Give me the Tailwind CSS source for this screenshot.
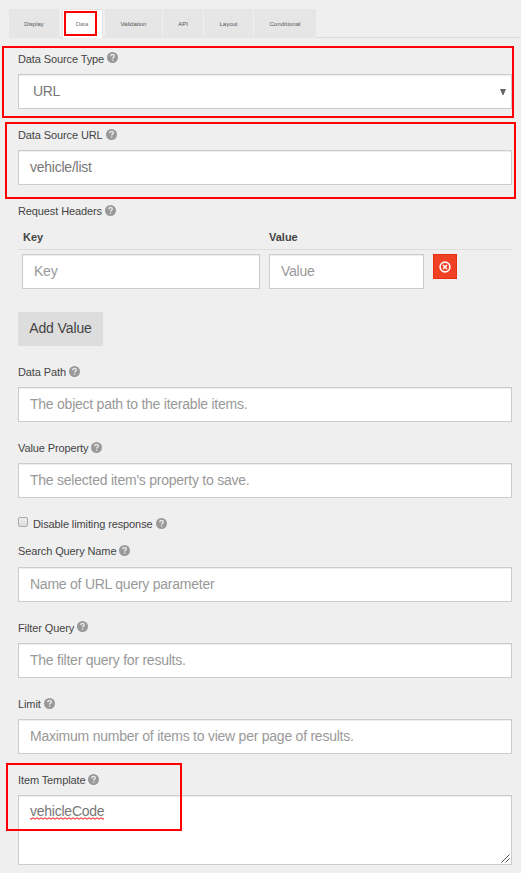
<!DOCTYPE html>
<html lang="en">
<head>
<meta charset="utf-8">
<title>Component settings</title>
<script src="https://cdn.jsdelivr.net/npm/@tailwindcss/browser@4"></script>
</head>
<body class="relative h-[873px] w-[521px] overflow-hidden bg-[#efefef] font-['Liberation_Sans',Arial,sans-serif] text-[11px] tracking-[-0.11px] text-[#444]">
<svg class="hidden">
  <symbol id="help" viewBox="0 0 11 11"><circle cx="5.5" cy="5.5" r="5.5" fill="#999"/><path d="M3.700 4.200C3.800 3.100 4.500 2.600 5.500 2.600c1.100 0 1.800.600 1.800 1.500 0 1.200-1.700 1.300-1.700 2.300M5.600 7.400v1.300" fill="none" stroke="#e4e4e4" stroke-width="1.500"/></symbol>
</svg>
<nav class="flex h-[38px] items-end pl-[9px] text-[6px] tracking-normal text-[#555]">
  <div class="flex h-[29px] w-[50px] items-center justify-center bg-[#e6e6e6] pt-px">Display</div>
  <div class="h-px w-[3px] bg-[#ddd]"></div>
  <div class="flex h-[29px] w-[41px] items-center justify-center border border-b-0 border-[#e4e4e4] bg-white pr-px text-[#777]">Data</div>
  <div class="h-px w-[2px] bg-[#ddd]"></div>
  <div class="flex h-[29px] w-[57px] items-center justify-center bg-[#e6e6e6] pt-px">Validation</div>
  <div class="h-px w-px bg-[#ddd]"></div>
  <div class="flex h-[29px] w-[40px] items-center justify-center bg-[#e6e6e6] pt-px">API</div>
  <div class="h-px w-px bg-[#ddd]"></div>
  <div class="flex h-[29px] w-[49px] items-center justify-center bg-[#e6e6e6] pt-px">Layout</div>
  <div class="h-px w-px bg-[#ddd]"></div>
  <div class="flex h-[29px] w-[62px] items-center justify-center bg-[#e6e6e6] pt-px tracking-[0.1px]">Conditional</div>
  <div class="h-px flex-1 bg-[#ddd]"></div>
</nav>
<main class="flex w-[512px] flex-col pt-3 pl-[18px]">
  <section>
    <div class="flex h-6 gap-[3px]"><span class="leading-[18px]">Data Source Type</span><svg class="mt-[2px] size-[11px]"><use href="#help"/></svg></div>
    <div class="flex h-[35px] items-center justify-between border border-[#ccc] bg-white pr-[5px] pl-[14px] text-[14px] tracking-[-0.3px] text-[#777] shadow-[inset_0_1px_1px_rgba(0,0,0,0.075)]"><span>URL</span><svg class="size-[6px]" viewBox="0 0 6 6"><path d="M0 0h6L3.500 6h-1z" fill="#666"/></svg></div>
  </section>
  <section class="mt-[17px]">
    <div class="flex h-6 gap-[3px]"><span class="leading-[18px]">Data Source URL</span><svg class="mt-[3px] size-[11px]"><use href="#help"/></svg></div>
    <div class="flex h-[35px] items-center border border-[#ccc] bg-white pl-[11px] text-[14px] tracking-[-0.24px] text-[#777] shadow-[inset_0_1px_1px_rgba(0,0,0,0.075)]">vehicle/list</div>
  </section>
  <section class="mt-[17px]">
    <div class="flex h-6 gap-[3px]"><span class="leading-[18px]">Request Headers</span><svg class="mt-[3px] size-[11px]"><use href="#help"/></svg></div>
    <div class="flex h-6 border-b border-[#ddd] pl-[5px] leading-[23px] font-bold tracking-normal"><span class="w-[246px]">Key</span><span>Value</span></div>
    <div class="flex pt-1 pl-1 text-[14px] tracking-[-0.24px] text-[#999]">
      <div class="flex h-[35px] w-[238px] items-center border border-[#ccc] bg-white pl-[11px] shadow-[inset_0_1px_1px_rgba(0,0,0,0.075)]">Key</div>
      <div class="ml-[9px] flex h-[35px] w-[155px] items-center border border-[#ccc] bg-white pl-[11px] shadow-[inset_0_1px_1px_rgba(0,0,0,0.075)]">Value</div>
      <div class="ml-[9px] flex h-[25px] w-6 items-center justify-center border border-[#ea2f10] bg-[#f04124]"><svg class="size-[12px]" viewBox="0 0 12 12" fill="none" stroke="#fff"><circle cx="6" cy="6" r="4.900" stroke-width="1.600"/><path d="M4 4l4 4M8 4L4 8" stroke-width="1.500"/></svg></div>
    </div>
    <div class="mt-[23px] flex h-[34px] w-[85px] items-center justify-center bg-[#ddd] pb-px text-[14px]">Add Value</div>
  </section>
  <section class="mt-[17px]">
    <div class="flex h-6 gap-[3px]"><span class="leading-[18px]">Data Path</span><svg class="mt-[3px] size-[11px]"><use href="#help"/></svg></div>
    <div class="flex h-[35px] items-center border border-[#ccc] bg-white pl-[11px] text-[14px] tracking-[-0.24px] text-[#999] shadow-[inset_0_1px_1px_rgba(0,0,0,0.075)]">The object path to the iterable items.</div>
  </section>
  <section class="mt-[17px]">
    <div class="flex h-6 gap-[3px]"><span class="leading-[18px]">Value Property</span><svg class="mt-[3px] size-[11px]"><use href="#help"/></svg></div>
    <div class="flex h-[35px] items-center border border-[#ccc] bg-white pl-[11px] text-[14px] tracking-[-0.24px] text-[#999] shadow-[inset_0_1px_1px_rgba(0,0,0,0.075)]">The selected item's property to save.</div>
  </section>
  <div class="mt-[17px] flex h-[27px] gap-[3px]"><span class="mt-[2px] mr-[2px] size-[10px] rounded-[2px] border border-[#aaa] bg-linear-to-b from-[#eee] to-[#ddd]"></span><span class="leading-[18px]">Disable limiting response</span><svg class="mt-[3px] size-[11px]"><use href="#help"/></svg></div>
  <section>
    <div class="flex h-[25px] gap-[3px]"><span class="leading-[18px]">Search Query Name</span><svg class="mt-[3px] size-[11px]"><use href="#help"/></svg></div>
    <div class="flex h-[35px] items-center border border-[#ccc] bg-white pl-[11px] text-[14px] tracking-[-0.24px] text-[#999] shadow-[inset_0_1px_1px_rgba(0,0,0,0.075)]">Name of URL query parameter</div>
  </section>
  <section class="mt-[17px]">
    <div class="flex h-6 gap-[3px]"><span class="leading-[18px]">Filter Query</span><svg class="mt-[2px] size-[11px]"><use href="#help"/></svg></div>
    <div class="flex h-[35px] items-center border border-[#ccc] bg-white pl-[11px] text-[14px] tracking-[-0.24px] text-[#999] shadow-[inset_0_1px_1px_rgba(0,0,0,0.075)]">The filter query for results.</div>
  </section>
  <section class="mt-[17px]">
    <div class="flex h-6 gap-[3px]"><span class="leading-[18px]">Limit</span><svg class="mt-[3px] size-[11px]"><use href="#help"/></svg></div>
    <div class="flex h-[35px] items-center border border-[#ccc] bg-white pl-[11px] text-[14px] tracking-[-0.24px] text-[#999] shadow-[inset_0_1px_1px_rgba(0,0,0,0.075)]">Maximum number of items to view per page of results.</div>
  </section>
  <section class="mt-[17px]">
    <div class="flex h-6 gap-[3px]"><span class="leading-[18px]">Item Template</span><svg class="mt-[3px] size-[11px]"><use href="#help"/></svg></div>
    <div class="flex h-[70px] items-start justify-between border border-[#ccc] bg-white pt-[7px] pl-[11px] text-[14px] tracking-[-0.24px] text-[#777] shadow-[inset_0_1px_1px_rgba(0,0,0,0.075)]"><span class="relative leading-[17px]">vehicleCode<svg class="absolute top-[14px] left-0 h-[3px] w-full"><defs><pattern id="wave" width="4" height="3" patternUnits="userSpaceOnUse"><path d="M-1 .5L1 2.300 3 .7 5 2.500" fill="none" stroke="#f00"/></pattern></defs><rect width="100%" height="3" fill="url(#wave)"/></svg></span><svg class="mr-px mb-px size-[9px] self-end" viewBox="0 0 9 9"><path d="M.5 8.500l8-8M4.500 8.500l4-4" stroke="#555" fill="none"/></svg></div>
  </section>
</main>
<div class="absolute top-[11px] left-[64px] h-[25px] w-[33px] border-2 border-[#f00]"></div>
<div class="absolute top-[46px] left-[2px] h-[72px] w-[512px] border-2 border-[#f00]"></div>
<div class="absolute top-[122px] left-[5px] h-[77px] w-[511px] border-2 border-[#f00]"></div>
<div class="absolute top-[763px] left-[6px] h-[68px] w-[176px] border-2 border-[#f00]"></div>
</body>
</html>
